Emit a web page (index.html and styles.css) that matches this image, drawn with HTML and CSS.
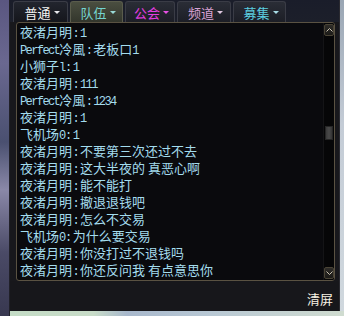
FILE: index.html
```html
<!DOCTYPE html>
<html lang="zh">
<head>
<meta charset="utf-8">
<link rel="stylesheet" href="styles.css">
</head>
<body>
<div class="screen">
  <div class="bg-left"></div>
  <div class="panel">
    <div class="tabs">
      <div class="tab tab-normal">普通</div>
      <div class="tab tab-team active">队伍</div>
      <div class="tab tab-guild">公会</div>
      <div class="tab tab-channel">频道</div>
      <div class="tab tab-recruit">募集</div>
    </div>
    <div class="chat">
      <div class="log">
        <div class="line">夜渚月明<span class="sep">:</span><span class="en">1</span></div>
        <div class="line"><span class="en">Perfect</span>冷風<span class="sep">:</span>老板口<span class="en">1</span></div>
        <div class="line">小狮子<span class="en">l</span><span class="sep">:</span><span class="en">1</span></div>
        <div class="line">夜渚月明<span class="sep">:</span><span class="en">111</span></div>
        <div class="line"><span class="en">Perfect</span>冷風<span class="sep">:</span><span class="en">1234</span></div>
        <div class="line">夜渚月明<span class="sep">:</span><span class="en">1</span></div>
        <div class="line">飞机场<span class="en">0</span><span class="sep">:</span><span class="en">1</span></div>
        <div class="line">夜渚月明<span class="sep">:</span>不要第三次还过不去</div>
        <div class="line">夜渚月明<span class="sep">:</span>这大半夜的 真恶心啊</div>
        <div class="line">夜渚月明<span class="sep">:</span>能不能打</div>
        <div class="line">夜渚月明<span class="sep">:</span>撤退退钱吧</div>
        <div class="line">夜渚月明<span class="sep">:</span>怎么不交易</div>
        <div class="line">飞机场<span class="en">0</span><span class="sep">:</span>为什么要交易</div>
        <div class="line">夜渚月明<span class="sep">:</span>你没打过不退钱吗</div>
        <div class="line">夜渚月明<span class="sep">:</span>你还反问我 有点意思你</div>
      </div>
      <div class="scroll">
        <div class="sbtn sbtn-up"><svg width="7" height="4" viewBox="0 0 7 4"><path d="M0.5 3.5 L3.5 0.5 L6.5 3.5" fill="none" stroke="#c8c0b0" stroke-width="1"/></svg></div>
        <div class="track"><div class="thumb"></div></div>
        <div class="sbtn sbtn-down"><svg width="7" height="4" viewBox="0 0 7 4"><path d="M0.5 0.5 L3.5 3.5 L6.5 0.5" fill="none" stroke="#c8c0b0" stroke-width="1"/></svg></div>
      </div>
    </div>
    <div class="foot"><span class="clear">清屏</span></div>
  </div>
  <div class="bg-right"></div>
  <div class="bg-bottom"></div>
</div>
</body>
</html>
```

FILE: styles.css
```css
* { box-sizing: border-box; margin: 0; padding: 0; }
html, body { width: 344px; height: 316px; overflow: hidden; background: #c9d6cc; }
body { font-family: "Noto Sans CJK SC", "Noto Sans", sans-serif; }

.screen {
  display: grid;
  grid-template-columns: 10px 330px 4px;
  grid-template-rows: 311px 5px;
  width: 344px;
  height: 316px;
}

.bg-left {
  grid-row: 1 / 3;
  grid-column: 1;
  background: linear-gradient(180deg, #5a5680 0%, #6a6890 20%, #4a5070 45%, #8a88a8 60%, #4a4a66 80%, #383850 100%);
  border-right: 1px solid #202028;
}
.bg-right {
  grid-row: 1;
  grid-column: 3;
  background: linear-gradient(180deg, #9aa6b4 0%, #c4ccd6 40%, #d0d8de 100%);
}
.bg-bottom {
  grid-row: 2;
  grid-column: 2 / 4;
  background: linear-gradient(90deg, #c4dcc6 0%, #c8dcc8 25%, #a8b8cc 35%, #b8c8d4 60%, #d0dcd0 100%);
}

.panel {
  grid-row: 1;
  grid-column: 2;
  background: #18181c;
  display: flex;
  flex-direction: column;
  border-right: 1px solid #2a2a30;
}

.tabs {
  height: 22px;
  display: flex;
  gap: 2px;
  padding: 1px 0 0 3px;
  background: linear-gradient(180deg, #1a1d2a, #1c1f2a);
}
.tab {
  width: 53px;
  height: 21px;
  border: 1px solid #3a3c46;
  border-bottom: none;
  border-radius: 3px 3px 0 0;
  background: linear-gradient(180deg, #2a2d36, #1c1e26);
  font-size: 13px;
  line-height: 19px;
  display: flex;
  align-items: center;
  justify-content: center;
  gap: 3px;
  padding-left: 3px;
}
.tab::after {
  content: "";
  width: 0;
  height: 0;
  border-left: 3px solid transparent;
  border-right: 3px solid transparent;
  border-top: 3px solid #e8e8ec;
  margin-top: 1px;
}
.tab-normal { width: 55px; color: #f4f4f4; background: linear-gradient(180deg, #22252e, #15161c); }
.tab-team { color: #74d4d0; }
.tab.active { background: linear-gradient(180deg, #4a4e40, #33362c); border-color: #5a5c4c; }
.tab-team::after { border-top-color: #9adad6; }
.tab-guild { color: #e43ee0; width: 50px; }
.tab-guild::after { border-top-color: #e850e4; }
.tab-channel { color: #d8a2d4; width: 54px; }
.tab-channel::after { border-top-color: #e0c8e0; }
.tab-recruit { color: #5ccfe0; }
.tab-recruit::after { border-top-color: #a8dce6; }

.chat {
  height: 259px;
  margin: 0 4px 0 6px;
  border: 1px solid #5a5242;
  border-radius: 3px;
  background: #0a0a0d;
  display: flex;
  overflow: hidden;
}
.log {
  flex: 1;
  padding: 0 0 0 3px;
  color: #a4dced;
  font-size: 13px;
  line-height: 17px;
  white-space: nowrap;
  overflow: hidden;
}
.line { height: 17px; }
.sep {
  display: inline-block;
  width: 8px;
  text-align: center;
  font-family: "Liberation Mono", monospace;
  font-size: 12px;
}
.en {
  font-family: "Liberation Mono", monospace;
  font-size: 12px;
  letter-spacing: -1.6px;
}

.scroll {
  width: 11px;
  display: flex;
  flex-direction: column;
  padding: 1px 1px 1px 0;
  background: #060607;
  border-left: 1px solid #141416;
}
.sbtn {
  width: 10px;
  height: 12px;
  border: 1px solid #4a4436;
  border-radius: 2px;
  background: linear-gradient(180deg, #2e2c28, #1c1b18);
  display: flex;
  align-items: center;
  justify-content: center;
}
.track {
  flex: 1;
  padding-top: 90px;
  display: flex;
  justify-content: center;
}
.thumb {
  width: 8px;
  height: 14px;
  background: linear-gradient(90deg, #3a3a3a, #4a4a4a, #343434);
  border: 1px solid #262626;
}

.foot {
  flex: 1;
  display: flex;
  justify-content: flex-end;
  align-items: flex-end;
  padding: 0 6px 4px 0;
  background: #17171b;
}
.clear {
  color: #f6f2e4;
  font-size: 13px;
  line-height: 16px;
}
```
